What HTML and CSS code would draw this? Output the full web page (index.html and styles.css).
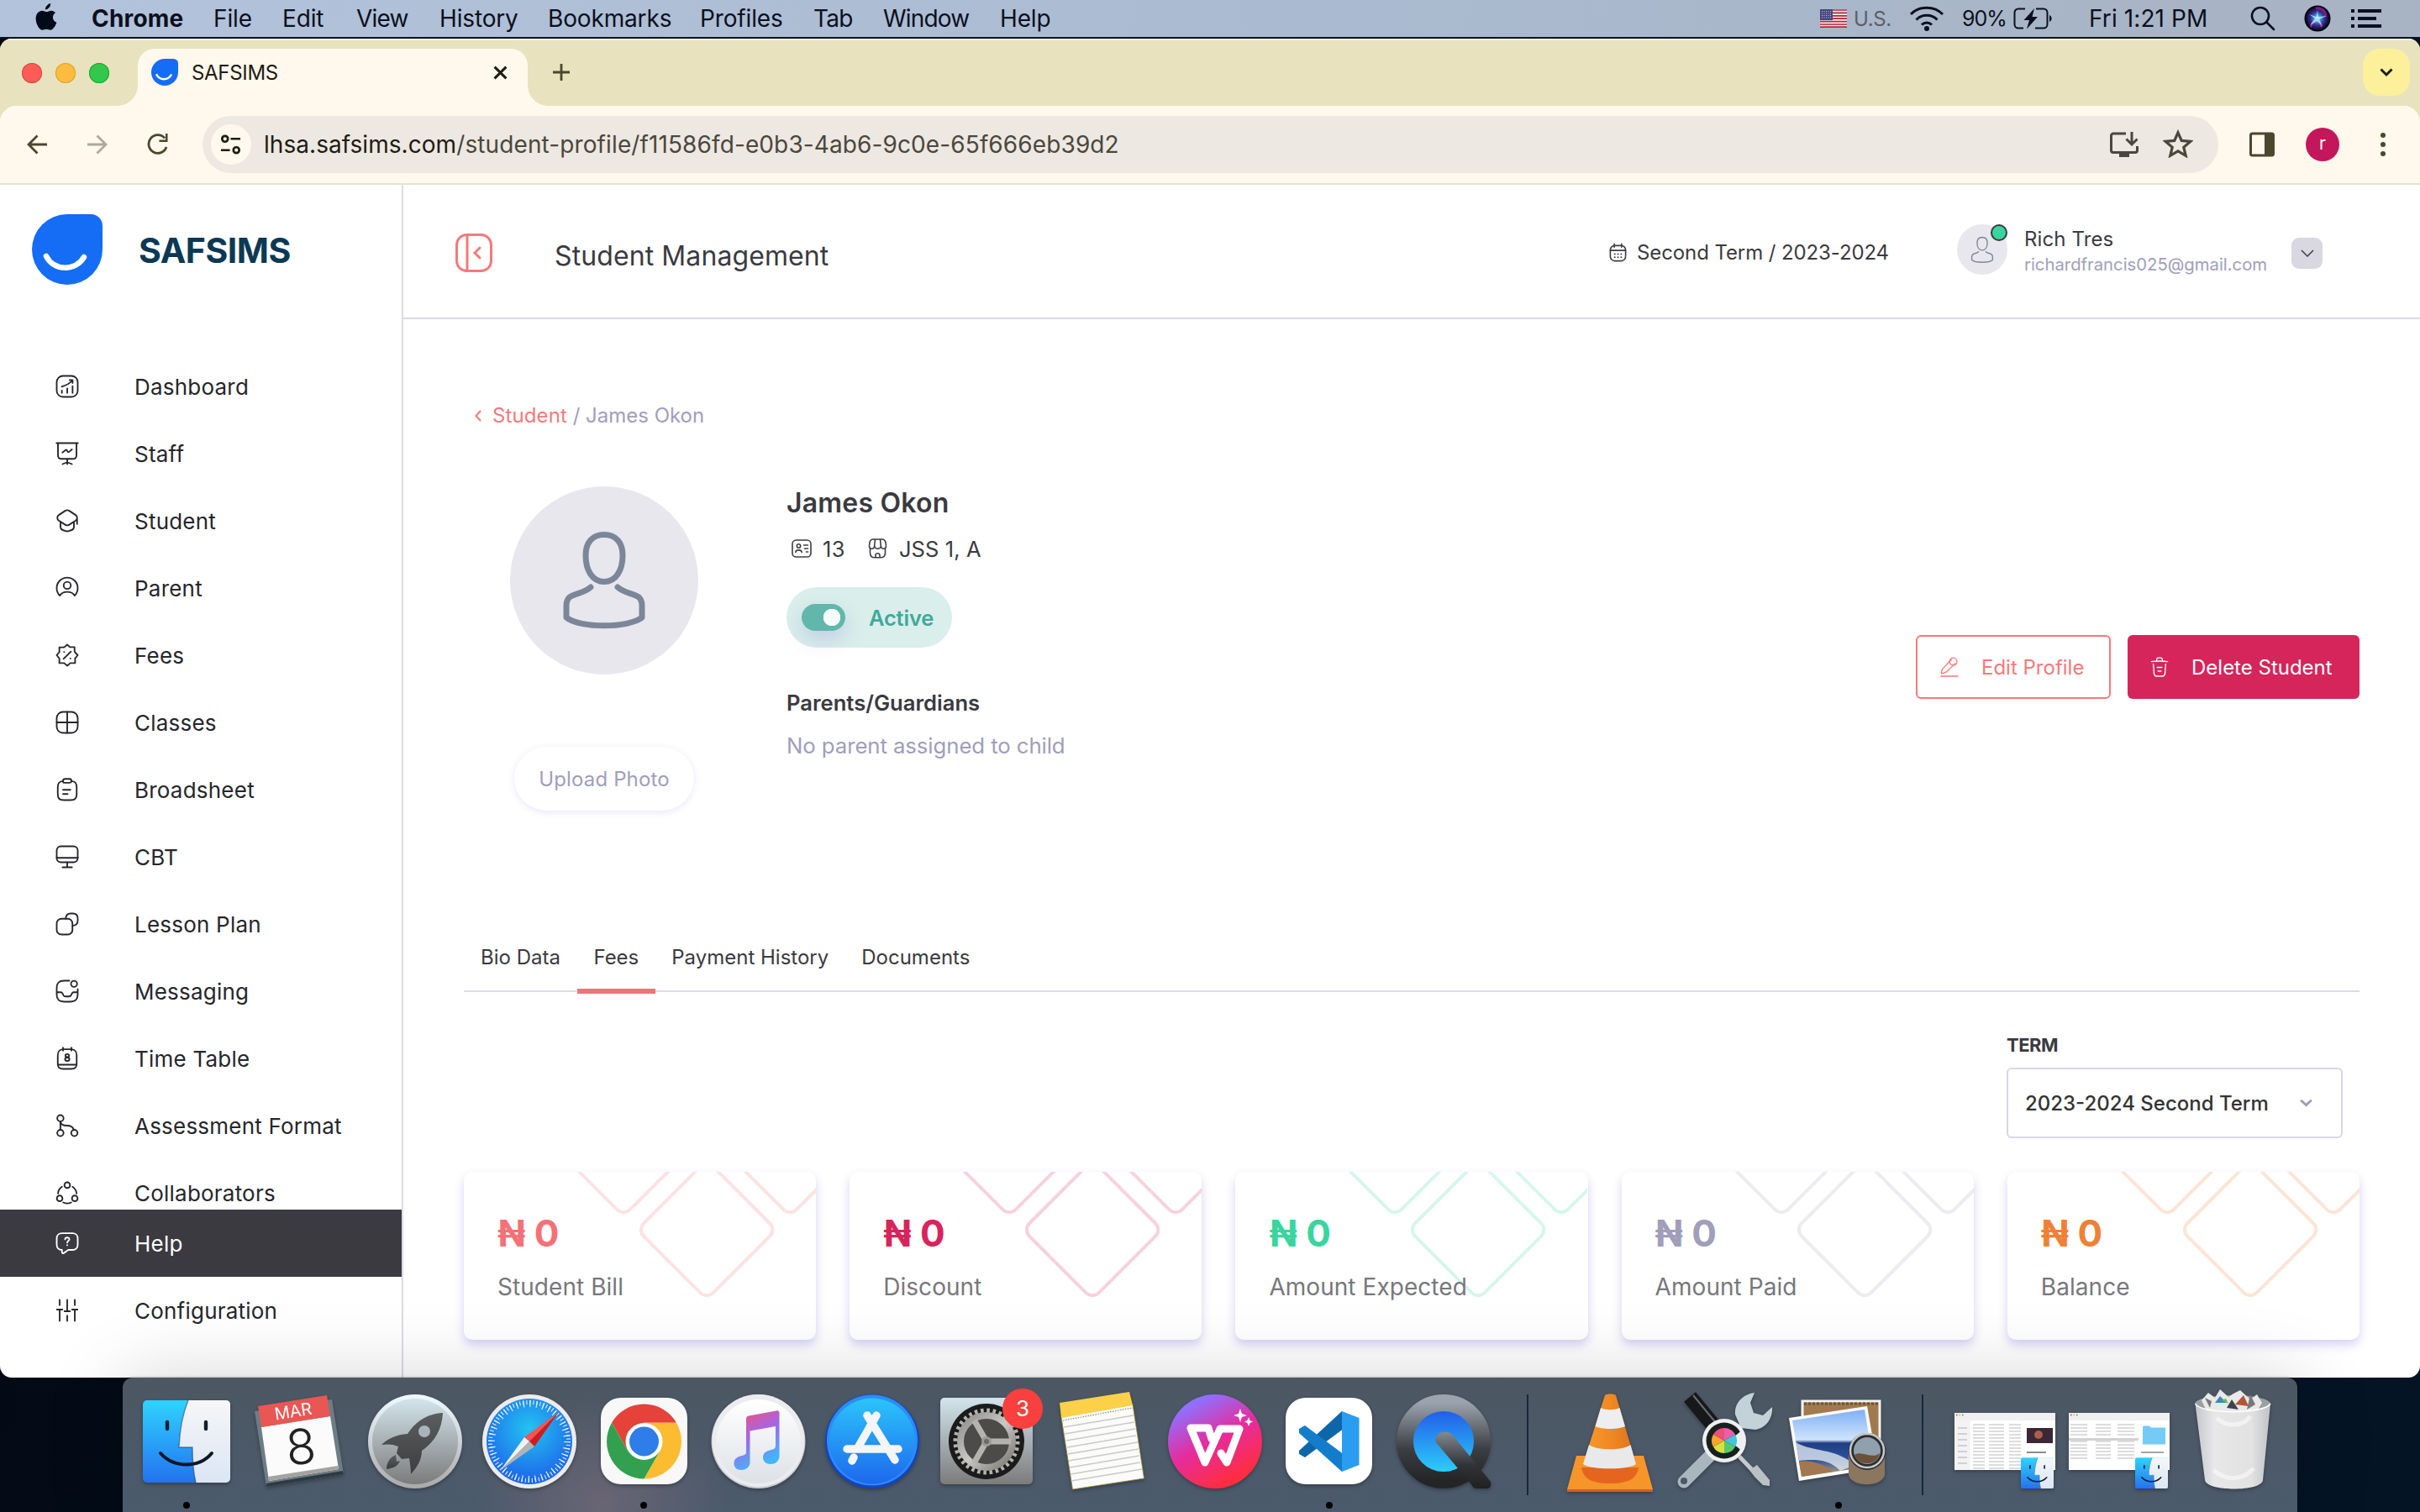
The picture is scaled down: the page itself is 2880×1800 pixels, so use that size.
FILE: index.html
```html
<!DOCTYPE html>
<html lang="en">
<head>
<meta charset="utf-8">
<title>SAFSIMS</title>
<link rel="stylesheet" href="styles.css">
</head>
<body>
<svg class="defs" width="0" height="0" aria-hidden="true">
  <defs>
    <linearGradient id="finderBlue" x1="0" y1="0" x2="0" y2="1"><stop offset="0" stop-color="#2fd3fe"/><stop offset="1" stop-color="#2373f0"/></linearGradient>
    <linearGradient id="finderWhite" x1="0" y1="0" x2="0" y2="1"><stop offset="0" stop-color="#f6f6f7"/><stop offset="1" stop-color="#dbe6f4"/></linearGradient>
    <linearGradient id="silver" x1="0" y1="0" x2="0" y2="1"><stop offset="0" stop-color="#d3e5ec"/><stop offset="1" stop-color="#7c7b7b"/></linearGradient>
    <linearGradient id="rim" x1="0" y1="0" x2="0" y2="1"><stop offset="0" stop-color="#effaff"/><stop offset="1" stop-color="#a9a9aa"/></linearGradient>
    <linearGradient id="rocket" x1="0" y1="0" x2="0" y2="1"><stop offset="0" stop-color="#5b5e60"/><stop offset="1" stop-color="#3c3d3e"/></linearGradient>
    <radialGradient id="safari" cx=".5" cy=".35" r=".65"><stop offset="0" stop-color="#23c3f0"/><stop offset="1" stop-color="#1c62ea"/></radialGradient>
    <linearGradient id="note" x1="0" y1="0" x2=".4" y2="1"><stop offset="0" stop-color="#fb4f66"/><stop offset=".5" stop-color="#a565e8"/><stop offset="1" stop-color="#3fb6fb"/></linearGradient>
    <linearGradient id="disc" x1="0" y1="0" x2="0" y2="1"><stop offset="0" stop-color="#fff"/><stop offset="1" stop-color="#dde1e6"/></linearGradient>
    <linearGradient id="store" x1="0" y1="0" x2="0" y2="1"><stop offset="0" stop-color="#2cc4fb"/><stop offset="1" stop-color="#1d68ee"/></linearGradient>
    <linearGradient id="wps" x1=".2" y1="0" x2=".75" y2="1"><stop offset=".1" stop-color="#8f70ff"/><stop offset=".5" stop-color="#e62c9c"/><stop offset=".9" stop-color="#ff2d40"/></linearGradient>
    <linearGradient id="qtRing" x1="0" y1="0" x2="0" y2="1"><stop offset="0" stop-color="#9aa3ae"/><stop offset=".6" stop-color="#3b3e42"/><stop offset="1" stop-color="#242526"/></linearGradient>
    <linearGradient id="qtBlue" x1="0" y1="0" x2="0" y2="1"><stop offset="0" stop-color="#2050e6"/><stop offset="1" stop-color="#2edcfd"/></linearGradient>
    <linearGradient id="qtTail" gradientUnits="userSpaceOnUse" x1="0" y1="64" x2="0" y2="132"><stop offset="0" stop-color="#848b93"/><stop offset=".6" stop-color="#303235"/><stop offset="1" stop-color="#202122"/></linearGradient>
    <linearGradient id="cone" x1="0" y1="0" x2="1" y2="0"><stop offset="0" stop-color="#f79a2a"/><stop offset=".5" stop-color="#f08a24"/><stop offset="1" stop-color="#e0701c"/></linearGradient>
    <linearGradient id="sky" x1="0" y1="0" x2="0" y2="1"><stop offset="0" stop-color="#7fb0f5"/><stop offset=".45" stop-color="#cfe4fb"/><stop offset=".5" stop-color="#1f3d86"/><stop offset=".75" stop-color="#2d5597"/><stop offset="1" stop-color="#c9a67c"/></linearGradient>
    <linearGradient id="bin" x1="0" y1="0" x2="1" y2="0"><stop offset="0" stop-color="#c9ccce"/><stop offset=".25" stop-color="#efefef"/><stop offset=".75" stop-color="#e9e9e8"/><stop offset="1" stop-color="#c5c8ca"/></linearGradient>
    <linearGradient id="metal" x1="0" y1="0" x2="1" y2="1"><stop offset="0" stop-color="#8d8d8b"/><stop offset=".5" stop-color="#c9c8c5"/><stop offset="1" stop-color="#77756f"/></linearGradient>
    <radialGradient id="siri"><stop offset="0" stop-color="#e8fbff"/><stop offset=".25" stop-color="#35a5d8"/><stop offset=".6" stop-color="#3a2b8f"/><stop offset="1" stop-color="#0b0820"/></radialGradient>
    <symbol id="finder" viewBox="16 27 104 98">
      <rect x="16" y="27" width="104" height="98" rx="5" fill="url(#finderBlue)"/>
      <path d="M70 27H115a5 5 0 0 1 5 5V120a5 5 0 0 1-5 5H79C76 112 75 98 75 83H59C60 62 63 44 70 27Z" fill="url(#finderWhite)"/>
      <path d="M70 27C63 44 60 62 59 83H75C75 98 76 112 79 125" fill="none" stroke="#153a66" stroke-opacity=".55" stroke-width="1.4"/>
      <path d="M45 53V61M91 53V61" stroke="#14202e" stroke-width="4.4" stroke-linecap="round"/>
      <path d="M37 90C53 108 83 108 98 90" fill="none" stroke="#0c1826" stroke-width="4" stroke-linecap="round"/>
    </symbol>
    <symbol id="logo" viewBox="0 0 84 84">
      <path d="M42 0H70A14 14 0 0 1 84 14V42A42 42 0 1 1 42 0Z" fill="#156cf5"/>
      <path d="M17 50C26 68 52 68 62 51" fill="none" stroke="#fff" stroke-width="6.5" stroke-linecap="round"/>
    </symbol>
    <symbol id="person" viewBox="0 0 100 120">
      <g fill="none" stroke-linecap="round" stroke-linejoin="round">
        <path d="M50 5.500C64 5.500 72 15 72 30 72 48 64 61.500 50 61.500S28 48 28 30C28 15 36 5.500 50 5.500Z"/>
        <path d="M34 68C22 79 5 73 5 90V104C20 117 80 117 95 104V90C95 73 78 79 66 68"/>
      </g>
    </symbol>
    <symbol id="diamonds" viewBox="0 0 419 200">
      <g fill="none" stroke="currentColor" stroke-width="4">
        <rect x="-58.5" y="-58.5" width="117" height="117" rx="11" transform="translate(289 69) rotate(45)"/>
        <rect x="-58.5" y="-58.5" width="117" height="117" rx="11" transform="translate(190 -30) rotate(45)"/>
        <rect x="-58.5" y="-58.5" width="117" height="117" rx="11" transform="translate(388 -30) rotate(45)"/>
      </g>
    </symbol>
  </defs>
</svg>

<header class="menubar">
  <svg class="apple" viewBox="0 0 26 32"><path d="M18 0C18.300 3.500 15.500 7 12 7.200 11.700 3.900 14.800.500 18 0ZM23.600 11C21.800 12.100 20.700 13.800 20.700 16.200 20.700 19 22.400 21 25 22 24.300 24.300 21.200 30.800 17.800 30.800 16.200 30.800 15.400 29.800 13.200 29.800 11 29.800 10.200 30.800 8.600 30.800 5 30.800 1 23.400 1 17.600 1 11.800 4.600 8.400 8.400 8.400 10.600 8.400 12 9.700 13.400 9.700 14.800 9.700 16.500 8.300 19 8.400 20.800 8.500 22.500 9.300 23.600 11Z"/></svg>
  <nav class="menus">
    <b>Chrome</b><span>File</span><span>Edit</span><span class="tight">View</span><span>History</span><span>Bookmarks</span><span>Profiles</span><span class="tight">Tab</span><span class="tight">Window</span><span>Help</span>
  </nav>
  <div class="status">
    <svg class="flag" viewBox="0 0 32 22"><rect width="32" height="22" fill="#f4f0f0"/><path d="M0 1H32M0 4.400H32M0 7.800H32M0 11.200H32M0 14.600H32M0 18H32M0 21.200H32" stroke="#b22334" stroke-width="1.700"/><rect width="15" height="13" fill="#46467f"/><path d="M2 2.500H14M2 5H14M2 7.500H14M2 10H14" stroke="#c9c9e0" stroke-dasharray="1 1.500"/></svg>
    <span class="locale">U.S.</span>
    <svg class="wifi" viewBox="0 0 42 30" fill="none" stroke="#0a1020" stroke-width="3"><path d="M2 10C12-.500 30-.500 40 10M8.500 16.500C15 9.500 27 9.500 33.500 16.500M15 22.500C18.500 19 23.500 19 27 22.500"/><circle cx="21" cy="27" r="1.500"/></svg>
    <span class="percent">90%</span>
    <svg class="battery" viewBox="0 0 46 26"><path d="M14 1.500H6A4.500 4.500 0 0 0 1.500 6V20A4.500 4.500 0 0 0 6 24.500H12M27 1.500H36A4.500 4.500 0 0 1 40.500 6V20A4.500 4.500 0 0 1 36 24.500H26" fill="none" stroke="#0a1020" stroke-width="2"/><path d="M25 1 12.500 15H19L16 25.500 29 11H22.500ZM43 9C46.500 10.500 46.500 15.500 43 17Z" fill="#0a1020"/></svg>
    <span class="clock">Fri 1:21 PM</span>
    <svg class="search" viewBox="0 0 30 30" fill="none" stroke="#0a1020" stroke-width="2.600" stroke-linecap="round"><circle cx="12" cy="12" r="10"/><path d="M19.500 19.500 28 28"/></svg>
    <svg class="siri" viewBox="0 0 32 32"><circle cx="16" cy="16" r="15.500" fill="#06040f"/><circle cx="16" cy="16" r="14" fill="url(#siri)"/><path d="M14 4C22 3 27 9 25 14" stroke="#a0269c" stroke-width="3" fill="none" opacity=".7"/><path d="M8 26C10 21 13 18 16 16M16 16 21 26" stroke="#d63ec2" stroke-width="2" fill="none" opacity=".7"/><path d="M16 6 17 14 27 13 18 17 22 25 15.500 19 7 24 13 16 6 11 14.500 14Z" fill="#bff6ff" opacity=".7"/></svg>
    <svg class="list" viewBox="0 0 36 22"><path d="M0 2H4M8 2H36M0 11H4M8 11H30M0 20H4M8 20H36" stroke="#0a1020" stroke-width="4"/></svg>
  </div>
</header>

<main class="window">
  <div class="tabstrip">
    <div class="lights"><i class="red"></i><i class="amber"></i><i class="green"></i></div>
    <div class="tab">
      <svg class="favicon"><use href="#logo"/></svg>
      <span>SAFSIMS</span>
      <svg class="close" viewBox="0 0 16 16"><path d="M1.500 1.500 14.500 14.500M14.500 1.500 1.500 14.500" stroke="#1e1c12" stroke-width="2.800"/></svg>
    </div>
    <svg class="plus" viewBox="0 0 20 20"><path d="M10 0V20M0 10H20" stroke="#4a472c" stroke-width="2.800"/></svg>
    <div class="tabsearch"><svg viewBox="0 0 16 11"><path d="M1.500 1.500 8 8 14.500 1.500" fill="none" stroke="#1e1c12" stroke-width="3"/></svg></div>
  </div>

  <div class="toolbar">
    <svg class="back" viewBox="0 0 24 24"><path d="M24 12H2M12.500 1.500 2 12 12.500 22.500" fill="none" stroke="#4a472c" stroke-width="2.800"/></svg>
    <svg class="forward" viewBox="0 0 24 24"><path d="M0 12H22M11.500 1.500 22 12 11.500 22.500" fill="none" stroke="#aeaa9a" stroke-width="2.800"/></svg>
    <svg class="reload" viewBox="0 0 26 26"><path d="M23 16A10.800 10.800 0 1 1 21 5.500" fill="none" stroke="#4a472c" stroke-width="2.800"/><path d="M24.500 0V10H14.500V7.500H22V0Z" fill="#4a472c"/></svg>
    <div class="address">
      <div class="siteinfo"><svg viewBox="0 0 26 24" fill="none" stroke="#1e1c12" stroke-width="2.800"><circle cx="6" cy="5" r="3.600"/><path d="M13 5H25M1 19H12"/><circle cx="20" cy="19" r="3.600"/></svg></div>
      <div class="url"><span>lhsa.safsims.com</span>/student-profile/f11586fd-e0b3-4ab6-9c0e-65f666eb39d2</div>
      <svg class="install" viewBox="0 0 34 30" fill="none" stroke="#4a473c" stroke-width="3"><path d="M19 2H4A2.500 2.500 0 0 0 1.500 4.500V22A2.500 2.500 0 0 0 4 24.500H30A2.500 2.500 0 0 0 32.500 22V17M26 0V14M19.500 8.500 26 15 32.500 8.500"/><path d="M11 26H23V30H11Z" fill="#4a473c" stroke="none"/></svg>
      <svg class="star" viewBox="0 0 34 32"><path d="M17 3.500 21 12.600 31 13.500 23.400 20 25.700 29.500 17 24.400 8.300 29.500 10.600 20 3 13.500 13 12.600Z" fill="none" stroke="#4a473c" stroke-width="3"/></svg>
    </div>
    <svg class="panel" viewBox="0 0 30 30"><rect x="1.500" y="2" width="27" height="26" rx="2" fill="none" stroke="#4a472c" stroke-width="3"/><path d="M18 2H28V28H18Z" fill="#4a472c"/></svg>
    <div class="profile">r</div>
    <svg class="dots" viewBox="0 0 6 28" fill="#4a472c"><circle cx="3" cy="3" r="3"/><circle cx="3" cy="14" r="3"/><circle cx="3" cy="25" r="3"/></svg>
  </div>

  <div class="app">
    <aside class="sidebar">
      <div class="brand"><svg><use href="#logo"/></svg><span>SAFSIMS</span></div>
      <ul class="nav scroll">
        <li><svg viewBox="0 0 24 24"><rect x="2" y="2" width="20" height="20" rx="6"/><path d="M6.900 18.200V16M12 18.200V14M17.100 18.200V11.800M17.100 6C14.300 9.200 10.700 11.300 6.900 12.200M14.200 5.900H17.100V8.800"/></svg>Dashboard</li>
        <li><svg viewBox="0 0 24 24"><path d="M1.800 2H22.200M3.200 2V13.500C3.200 16 4.200 17 6.700 17H17.300C19.800 17 20.800 16 20.800 13.500V2M12 17V22M7.500 22 12 20.200 16.500 22M7.500 11 10.200 8.700C10.800 8.300 11.300 8.400 11.700 8.900L12.300 10C12.700 10.600 13.300 10.700 13.800 10.300L16.500 8"/></svg>Staff</li>
        <li><svg viewBox="0 0 24 24"><path d="M10 2.500 4 6.500C2.100 7.700 2.100 10.500 4 11.800L10 15.700C11.100 16.400 12.900 16.400 14 15.700L20 11.800C21.900 10.500 21.900 7.800 20 6.500L14 2.500C12.900 1.800 11.100 1.800 10 2.500ZM5.600 13.100V17.800C5.600 19.100 6.600 20.400 7.800 20.800L11 21.900C11.500 22 12.400 22 13 21.900L16.200 20.800C17.400 20.400 18.400 19.100 18.400 17.800V13.100M21.400 15V9"/></svg>Student</li>
        <li><svg viewBox="0 0 24 24"><path d="M5 19.200A10 10 0 1 1 19 19.200"/><circle cx="12" cy="9.500" r="3.400"/><path d="M5.500 18.500C8 14.800 16 14.800 18.500 18.500"/></svg>Parent</li>
        <li><svg viewBox="0 0 24 24"><path d="M12 2 14.600 4.300H19V8.700L22 12 19.500 15V19.500H15L12 22 9 19.500H4.500V15L2 12 4.500 9V4.500H9Z"/><path d="M8.500 15.500 15.500 8.500M9 8.900H9.100M15 15.100H15.100"/></svg>Fees</li>
        <li><svg viewBox="0 0 24 24"><rect x="2" y="2" width="20" height="20" rx="6"/><path d="M12 2V22M2 12H22"/></svg>Classes</li>
        <li><svg viewBox="0 0 24 24"><path d="M8 12.200H15M8 16.200H12.400M10 5.500H14C16 5.500 16 4.500 16 3.800 16 1.800 15 1.800 14 1.800H10C9 1.800 8 1.800 8 3.800S9 5.500 10 5.500ZM16 3.900C19.300 4.100 21 5.300 21 9.800V16C21 20 20 22 15 22H9C4 22 3 20 3 16V9.800C3 5.300 4.700 4.100 8 3.900"/></svg>Broadsheet</li>
        <li><svg viewBox="0 0 24 24"><rect x="2" y="2" width="20" height="15.200" rx="4"/><path d="M2 13H22M12 17.200V22M7.500 22H16.500"/></svg>CBT</li>
        <li><svg viewBox="0 0 24 24"><rect x="2" y="7" width="15" height="15" rx="4.500"/><path d="M10.500 6.800C10.700 3.500 12 2 15.300 2H17.500C20.800 2 22 3.300 22 6.500V8.700C22 12 20.500 13.300 17.200 13.500"/></svg>Lesson Plan</li>
        <li><svg viewBox="0 0 24 24"><path d="M14 2H9C4 2 2 4 2 9V15C2 20 4 22 9 22H15C20 22 22 20 22 15V10M2 13H5.800C6.500 13 7.200 13.400 7.500 14.100L8.400 15.900C9 17 10 17 10.200 17H13.800C14.600 17 15.300 16.600 15.600 15.900L16.500 14.100C16.800 13.400 17.500 13 18.200 13H22"/><circle cx="18.500" cy="5" r="2.900"/></svg>Messaging</li>
        <li><svg viewBox="0 0 24 24"><path d="M8 1.800V4.500M16 1.800V4.500M3 18H21M16 3.300C19.300 3.500 21 4.800 21 9.500V16.500C21 20.500 20 22 15.500 22H8.500C4 22 3 20.500 3 16.500V9.500C3 4.800 4.700 3.500 8 3.300Z"/><ellipse cx="12" cy="9.300" rx="1.700" ry="1.400"/><ellipse cx="12" cy="12.800" rx="2.100" ry="1.600"/></svg>Time Table</li>
        <li><svg viewBox="0 0 24 24"><circle cx="5.500" cy="5" r="3"/><circle cx="5.500" cy="19" r="3"/><circle cx="18.800" cy="19" r="3"/><path d="M5.500 8V16M5.700 9C6.300 11.300 8.500 12 11.500 12 15 12 17.500 13 18.300 16"/></svg>Assessment Format</li>
        <li><svg viewBox="0 0 24 24"><circle cx="12" cy="4.700" r="2.700"/><circle cx="4.800" cy="17.300" r="2.700"/><circle cx="19.200" cy="17.300" r="2.700"/><path d="M17 6.200C19.200 7.600 20.600 10 20.900 12.600M3.200 12.700C3.400 10 4.800 7.700 7 6.200M8.200 21.200C10.500 22.300 13.500 22.300 15.800 21.200"/></svg>Collaborators</li>
      </ul>
      <ul class="nav">
        <li class="active"><svg viewBox="0 0 24 24"><path d="M17 18.400H13L8.600 21.500C7.900 21.900 7 21.500 7 20.600V18.400C4 18.400 2 16.400 2 13.400V7.500C2 4.500 4 2.500 7 2.500H17C20 2.500 22 4.500 22 7.500V13.400C22 16.400 20 18.400 17 18.400ZM12 11.400C12 10 14 10 14 8.200 14 7.100 13.100 6.600 12 6.600S10 7.300 10 8.300M12 13.800V13.900"/></svg>Help</li>
        <li><svg viewBox="0 0 24 24"><path d="M4.800 2V7M4.800 22V11.200M2.200 11.200H7.400M12 2V12.800M12 22V17M9.400 12.800H14.600M19.200 2V7M19.200 22V11.200M16.600 11.200H21.800"/></svg>Configuration</li>
      </ul>
    </aside>

    <section class="main">
      <header class="topbar">
        <svg class="collapse" viewBox="0 0 44 46" fill="none" stroke="#f37a7c" stroke-width="3"><rect x="1.500" y="1.500" width="41" height="43" rx="12"/><path d="M14 2V44"/><path d="M29 17 23 23 29 29" stroke-linecap="round"/></svg>
        <h1>Student Management</h1>
        <div class="term">
          <svg viewBox="0 0 24 24" fill="none" stroke="#3d3d44" stroke-width="1.700" stroke-linecap="round"><rect x="2.500" y="3.500" width="19" height="19" rx="5.500"/><path d="M7.500 1.500V5.500M16.500 1.500V5.500M2.500 9.500H21.500"/><path d="M8 14H8.100M12 14H12.100M16 14H16.100M8 18H8.100M12 18H12.100M16 18H16.100" stroke-width="2"/></svg>
          Second Term / 2023-2024
        </div>
        <div class="avatar small"><svg><use href="#person"/></svg><i></i></div>
        <div class="who"><b>Rich Tres</b><span>richardfrancis025@gmail.com</span></div>
        <div class="caret"><svg viewBox="0 0 16 9"><path d="M1 1 8 8 15 1" fill="none" stroke="#3d3d44" stroke-width="1.500"/></svg></div>
      </header>

      <div class="content">
        <div class="crumbs"><svg viewBox="0 0 8 14"><path d="M7 1 1.500 7 7 13" fill="none" stroke="#f37a7c" stroke-width="2"/></svg><a>Student</a> / James Okon</div>

        <div class="student">
          <div class="photo">
            <div class="avatar"><svg><use href="#person"/></svg></div>
            <button class="upload">Upload Photo</button>
          </div>
          <div class="info">
            <h2>James Okon</h2>
            <div class="meta">
              <svg viewBox="0 0 24 22" fill="none" stroke="#3d3d44" stroke-width="1.600" stroke-linecap="round"><rect x="1" y="1" width="22" height="20" rx="4.500"/><circle cx="8.500" cy="8" r="2.200"/><path d="M4.800 15.500C5.300 12 11.700 12 12.200 15.500M14.500 7H19.500M15.500 11H19.500M17.500 15H19.500"/></svg>
              <span class="num">13</span>
              <svg class="shop" viewBox="0 0 22 24" fill="none" stroke="#3d3d44" stroke-width="1.600"><path d="M2 11V17C2 21 3.500 22.800 7.500 22.800H14.500C18.500 22.800 20 21 20 17V11"/><path d="M8 1 7.200 8.500A3.800 3.800 0 0 0 14.800 8.500L14 1ZM8 1H5.500C2.500 1 2 2.500 1.500 5L1 8.500C.800 10.500 2 12.300 4.200 12.300 6 12.300 7 11 7.200 9M14 1H16.500C19.500 1 20 2.500 20.500 5L21 8.500C21.200 10.500 20 12.300 17.800 12.300 16 12.300 15 11 14.800 9M8.500 22.500V20C8.500 17 13.500 17 13.500 20V22.500"/></svg>
              <span>JSS 1, A</span>
            </div>
            <div class="state"><i class="switch"></i>Active</div>
            <h3>Parents/Guardians</h3>
            <p>No parent assigned to child</p>
          </div>
          <div class="actions">
            <button class="edit"><svg viewBox="0 0 24 26"><path d="M14.500 3.500 4 14.500C2.500 16 1.500 18.500 1.500 21.500 4.500 21.500 7 20.500 8.500 19L19.500 8.500"/><circle cx="17" cy="6" r="4.800"/><path d="M1 25H23"/></svg>Edit Profile</button>
            <button class="delete"><svg viewBox="0 0 24 26"><path d="M1.500 6C8 5.200 16 5.200 22.500 6M8 5.300 8.600 2.500C8.800 1.600 9 1.200 10.200 1.200H13.800C15 1.200 15.200 1.700 15.400 2.500L16 5.300M20 9.500 19.200 20.500C19 23.500 18.500 25 15.500 25H8.500C5.500 25 5 23.500 4.800 20.500L4 9.500M10 18.500H14M9 13.500H15"/></svg>Delete Student</button>
          </div>
        </div>

        <nav class="tabs"><a>Bio Data</a><a class="on">Fees</a><a>Payment History</a><a>Documents</a></nav>

        <div class="filter">
          <label>TERM</label>
          <div class="select"><span>2023-2024 Second Term</span><svg viewBox="0 0 14 9"><path d="M1.500 1.500 7 6.500 12.500 1.500" fill="none" stroke="#9d9cb5" stroke-width="2.800" stroke-linecap="round"/></svg></div>
        </div>

        <div class="cards">
          <div class="card coral"><svg><use href="#diamonds"/></svg><b>₦ 0</b><span>Student Bill</span></div>
          <div class="card crimson"><svg><use href="#diamonds"/></svg><b>₦ 0</b><span>Discount</span></div>
          <div class="card mint"><svg><use href="#diamonds"/></svg><b>₦ 0</b><span>Amount Expected</span></div>
          <div class="card mauve"><svg><use href="#diamonds"/></svg><b>₦ 0</b><span>Amount Paid</span></div>
          <div class="card orange"><svg><use href="#diamonds"/></svg><b>₦ 0</b><span>Balance</span></div>
        </div>
      </div>
    </section>
  </div>
</main>

<footer class="dock">
  <div class="slot running"><svg viewBox="0 0 136 160"><use href="#finder" x="16" y="27" width="104" height="98"/></svg></div>
  <div class="slot"><svg viewBox="0 0 136 160">
    <path d="M13 40 105 26 119 115 27 130Z" fill="#6d7d86"/><path d="M27 130 119 115 118 111 27 126Z" fill="#2e3a40"/>
    <path d="M21 59 103 46 113 109 30 123Z" fill="#fbfbfb"/><path d="M30 123 113 109 112 105 29 118Z" fill="#a4a39d"/>
    <path d="M17 34 99 21 103 46 21 59Z" fill="#e85753"/>
    <text class="cal-month" x="0" y="0" transform="translate(60 47) rotate(-9)">MAR</text>
    <text class="cal-day" x="0" y="0" transform="translate(70 103) rotate(-5)">8</text></svg></div>
  <div class="slot"><svg viewBox="0 0 136 160"><circle cx="68" cy="76" r="56" fill="url(#rim)"/><circle cx="68" cy="76" r="51" fill="url(#silver)"/>
    <path d="M101 42C84 43 70 50 59 67 46 68 36 72 28 80 35 79 41 79 48 82L46 90 52 97 61 96C62 103 63 109 63 115 71 106 76 97 76 87 92 76 100 61 101 42Z" fill="url(#rocket)"/><circle cx="79" cy="64" r="7" fill="#a9b4ba"/><path d="M45 92C38 95 34 101 34 109 42 108 48 105 50 99L46 100Z" fill="url(#rocket)"/></svg></div>
  <div class="slot"><svg viewBox="0 0 136 160"><circle cx="68" cy="76" r="56" fill="#ececec"/><circle cx="68" cy="76" r="51" fill="url(#safari)"/>
    <circle cx="68" cy="76" r="46.500" fill="none" stroke="#e8f2fb" stroke-width="5" stroke-dasharray="1.100 2.958"/><circle cx="68" cy="76" r="45" fill="none" stroke="#e8f2fb" stroke-width="8" stroke-dasharray="1.200 6.654"/>
    <path d="M103 41 62 71 68 76Z" fill="#ff5150"/><path d="M103 41 74 82 68 76Z" fill="#d01c1c"/><path d="M33 111 62 71 68 76Z" fill="#f2f2f2"/><path d="M33 111 74 82 68 76Z" fill="#b3b3b3"/></svg></div>
  <div class="slot running"><svg viewBox="0 0 136 160"><rect x="17" y="24" width="103" height="103" rx="24" fill="#f8f8f8"/>
    <g transform="translate(68.500 76)"><path d="M-38.500-22.250A44.500 44.500 0 0 1 38.500-22.250H0L-19.300 11.100Z" fill="#e5423a"/><path d="M-38.500-22.250A44.500 44.500 0 0 0 0 44.500L19.300 11.100-19.300 11.100Z" fill="#33a04f"/><path d="M38.500-22.250A44.500 44.500 0 0 1 0 44.500L19.300 11.100 0-22.250Z" fill="#fbbc32"/><circle r="22" fill="#fff"/><circle r="17.500" fill="#2f7de9"/></g></svg></div>
  <div class="slot"><svg viewBox="0 0 136 160"><circle cx="68.500" cy="76" r="56" fill="#c8ccd1"/><circle cx="68.500" cy="75" r="55" fill="#ececee"/><circle cx="68.500" cy="76" r="50" fill="url(#disc)"/>
    <path d="M54 49C54 47 55 46 57 45.500L90 39.500C92 39 93.500 40 93.500 42V93C93.500 100 88 103 83 103 78 103 74 100 74 95 74 89 79 87 84 86 88 85 89 84 89 80V58L58.500 63.500V101C58.500 107 53 110 48 110 43 110 39.500 107 39.500 102 39.500 96 44 94 49 93 53 92 54 91 54 88Z" fill="url(#note)"/></svg></div>
  <div class="slot"><svg viewBox="0 0 136 160"><circle cx="68" cy="76" r="56" fill="#1443c4"/><circle cx="68" cy="74.500" r="54" fill="#2a8df5"/><circle cx="68" cy="75.500" r="51" fill="url(#store)"/>
    <g stroke="#f3f5f8" stroke-width="9.500" stroke-linecap="round"><path d="M73 45 50 85M46 95 44 99M62 45 95 98M38 85H99"/></g></svg></div>
  <div class="slot"><svg viewBox="0 0 136 160"><rect x="13" y="24" width="110" height="103" rx="5" fill="url(#silver)"/><circle cx="68" cy="76" r="45" fill="#1b1b1b"/>
    <circle cx="68" cy="76" r="37" fill="none" stroke="#b4b3af" stroke-width="5" stroke-dasharray="3.600 3.665"/><circle cx="68" cy="76" r="31" fill="#4c4b49" stroke="url(#metal)" stroke-width="8"/>
    <path d="M68 76H97M68 76 53.500 51M68 76 53.500 101" stroke="#b5b3ae" stroke-width="7"/><circle cx="68" cy="76" r="6" fill="#9b9a97"/><circle cx="68" cy="76" r="3" fill="#6b6a68"/></svg><span class="badge">3</span></div>
  <div class="slot"><svg viewBox="0 0 136 160"><path d="M21 47 106 32 119.500 120 34.500 133Z" fill="#fbfbf9" stroke="#9b8a3a" stroke-width=".800"/><path d="M19 30 102 17 106 33 21 48Z" fill="#fcd048"/>
    <path d="M23 51 106 36" stroke="#8a8a84" stroke-width="1.200" stroke-dasharray="1.500 1.500"/><path d="M24 59 107 45M25 67 108 53M27 75 109 61M28 83 110 69M29 91 112 77M30 99 113 85M31 107 114 93M32 115 115 101M33 123 117 109" stroke="#c9c9c6" stroke-width="1.300"/></svg></div>
  <div class="slot"><svg viewBox="0 0 136 160"><circle cx="68" cy="76" r="56" fill="url(#wps)"/>
    <path d="M64 73 60 60H39L56 101 74 61H97L82 101 75 90" fill="none" stroke="#fff" stroke-width="9" stroke-linejoin="round" stroke-linecap="round"/><path d="M98 37 100 43 106 45 100 47 98 53 96 47 90 45 96 43ZM108 47 109.500 51 113 52.500 109.500 54 108 58 106.500 54 103 52.500 106.500 51Z" fill="#fff"/></svg></div>
  <div class="slot running"><svg viewBox="0 0 136 160"><rect x="16" y="24" width="103" height="103" rx="24" fill="#fff"/>
    <path d="M83 40 32 87V91L39 95 86 60Z" fill="#0d66a9"/><path d="M39 57 32 61V66L83 112 86 92Z" fill="#147dcb"/><path d="M83 40 103.500 48V104L83 112Z" fill="#2b9df0"/></svg></div>
  <div class="slot"><svg viewBox="0 0 136 160"><circle cx="68" cy="76" r="46" fill="url(#qtBlue)" stroke="url(#qtRing)" stroke-width="20"/><path d="M58 76C58 63 74 61 80 70L124 124C125 130 123 132 119 132H108C104 132 103 131 101 127Z" fill="url(#qtTail)"/></svg></div>
  <div class="rule"></div>
  <div class="slot"><svg viewBox="0 0 136 160"><path d="M28 93H108L119 133V136H17V133Z" fill="#f6952a"/><path d="M17 133H119V136H17Z" fill="#d5601a"/>
    <path d="M34 107C36 118 42 126 68 126S100 118 102 107Z" fill="#e5651f"/><path d="M62 21C64 19 73 19 75 21L99 103C92 110 44 110 36 103Z" fill="url(#cone)"/>
    <path d="M57 36C62 39 74 39 79.500 36L86 58C78 62 58 62 50.500 58Z" fill="#eeeeef"/><path d="M43 80C52 87 84 87 92.500 80L99 103C92 110 44 110 36 103Z" fill="#e9e9ea"/></svg></div>
  <div class="slot"><svg viewBox="0 0 136 160"><path d="M27 23 56 58" stroke="#17181a" stroke-width="18"/><path d="M31 21 59 55" stroke="#6a6d70" stroke-width="2"/><path d="M86 94 108 117" stroke="#c4cacd" stroke-width="5"/><path d="M98 110 107 104 122 122V129L114 128 104 118Z" fill="#b9c1c5"/>
    <path d="M82 62 20 124" stroke="#a9b6bd" stroke-width="15" stroke-linecap="round"/><circle cx="20" cy="123" r="4" fill="#4c5866"/><path d="M104 18C90 20 80 30 81 44L88 60 105 62C118 60 126 48 125 35L114 45 103 42 99 30Z" fill="#c3d2d9"/>
    <circle cx="68" cy="75" r="26" fill="#eef0f0"/><circle cx="68" cy="75" r="21.500" fill="#16211f"/><path d="M74 75 90 62V88Z" fill="#eef0f0"/>
    <path d="M68 75V60A15 15 0 0 1 81 67.500Z" fill="#ef5da8"/><path d="M68 75 81 67.500A15 15 0 0 1 81 82.500Z" fill="#45c4da"/><path d="M68 75 81 82.500A15 15 0 0 1 68 90Z" fill="#57c96a"/><path d="M68 75V90A15 15 0 0 1 55 82.500Z" fill="#d8e23c"/><path d="M68 75 55 82.500A15 15 0 0 1 55 67.500Z" fill="#f6a32f"/><path d="M68 75 55 67.500A15 15 0 0 1 68 60Z" fill="#e8517a"/></svg></div>
  <div class="slot running"><svg viewBox="0 0 136 160"><rect x="25" y="28" width="92" height="60" fill="#a07a4e" stroke="#f3f3f3" stroke-width="3"/><path d="M27 31H115" stroke="#6f5333" stroke-width="3" stroke-dasharray="3 2"/>
    <path d="M9 48 102 34 115 108 21 123Z" fill="#fbfbfb"/><path d="M13 51 99 38 110 105 24 118Z" fill="url(#sky)"/><path d="M17 77C40 90 60 82 88 104L70 111C55 95 35 98 21 99Z" fill="#e8f0f7" opacity=".75"/><path d="M21 100C35 98 50 103 62 112L24 118Z" fill="#a1784f"/>
    <path d="M80 90V116C84 131 119 131 123 116V88Z" fill="#8b7660"/><circle cx="102" cy="88" r="22" fill="#2c2d30"/><circle cx="102" cy="87" r="20" fill="none" stroke="#c9c9c9" stroke-width="2.500"/><circle cx="102" cy="87" r="16" fill="#91a0ad"/><path d="M87 92C95 86 108 98 117 90 114 106 91 106 87 92Z" fill="#6b5139"/></svg></div>
  <div class="rule"></div>
  <div class="slot"><svg viewBox="0 0 136 160"><rect x="8" y="42" width="120" height="68" fill="#fff"/><rect x="8" y="42" width="120" height="9" fill="#f0f0f0"/><rect x="8" y="51" width="19" height="59" fill="#f4f3f3"/><path d="M10 44.500H11.500" stroke="#ef4f47" stroke-width="2"/><path d="M13.500 44.500H15" stroke="#f4b93c" stroke-width="2"/><path d="M17 44.500H18.500" stroke="#44bb46" stroke-width="2"/>
    <path d="M12 60H23M12 67H23M12 74H23M12 81H23M12 88H23M12 95H23M12 102H23" stroke="#c5c5c8" stroke-width="1.300"/><path d="M30 56H88M30 60H88M30 64H88M30 68H88M30 72H88M30 76H88M30 80H88M30 84H88M30 88H88M30 92H88M30 96H88M30 100H88M30 104H88M30 108H88" stroke="#b9b9bb" stroke-width="1.200" stroke-dasharray="14 5 18 6"/>
    <rect x="94" y="60" width="31" height="18" fill="#3b2735"/><circle cx="108" cy="68" r="5" fill="#a8604a"/><path d="M94 89H117" stroke="#666" stroke-width="1.500"/><use href="#finder" x="87" y="95" width="39" height="37"/></svg></div>
  <div class="slot"><svg viewBox="0 0 136 160"><rect x="8" y="42" width="120" height="68" fill="#fff"/><rect x="8" y="42" width="120" height="9" fill="#f0f0f0"/><path d="M10 44.500H11.500" stroke="#ef4f47" stroke-width="2"/><path d="M13.500 44.500H15" stroke="#f4b93c" stroke-width="2"/><path d="M17 44.500H18.500" stroke="#44bb46" stroke-width="2"/>
    <path d="M10 56H88M10 60H88M10 64H88M10 68H88M10 76H88M10 80H88M10 84H88M10 88H88M10 92H88M10 96H88" stroke="#b9b9bb" stroke-width="1.200" stroke-dasharray="20 10 18 8"/><path d="M8 73.500H91" stroke="#d2d2d4" stroke-width="3"/>
    <path d="M96 59A1.500 1.500 0 0 1 97.500 57.500H104L106 59.500H123V79.500H96Z" fill="#74cbf5"/><path d="M94 89H121" stroke="#888" stroke-width="1.500"/><use href="#finder" x="87" y="95" width="39" height="37"/></svg></div>
  <div class="slot"><svg viewBox="0 0 136 160"><ellipse cx="67" cy="31" rx="45" ry="10" fill="#9aa0a3"/><path d="M30 27 38 18 46 24 52 14 62 23 68 19 76 15 88 26 96 20 102 30 96 40H36Z" fill="#e9e9e7"/><path d="M34 24 42 28 40 36ZM88 20 94 32 84 38Z" fill="#77787a"/><path d="M46 30 52 22 60 30Z" fill="#3f86c4"/><path d="M70 32 80 21 86 34Z" fill="#b4553a"/><path d="M60 36 66 26 74 38Z" fill="#3c4450"/><path d="M54 27 59 25 62 31Z" fill="#5fbf5a"/>
    <path d="M22.500 31C30 44 104 44 112 31L103 122C102 136 36 136 34 122Z" fill="url(#bin)" opacity=".96"/><path d="M22.500 31C30 44 104 44 112 31" fill="none" stroke="#fff" stroke-width="1.500"/><path d="M48 48C60 60 80 58 88 46M44 110C60 124 80 122 92 108" fill="none" stroke="#fff" stroke-width="5" opacity=".5"/></svg></div>
</footer>
</body>
</html>
```
FILE: styles.css
```css
* { box-sizing: border-box; margin: 0; padding: 0; }
html, body { width: 2880px; height: 1800px; overflow: hidden; }
body {
  display: flex; flex-direction: column;
  font-family: Inter, "Liberation Sans", sans-serif; color: #3a3a40;
  background: linear-gradient(120deg, #02060e, #04101f 60%, #051425);
}
svg { display: block; flex: none; }
ul { list-style: none; }
button { font: inherit; border: 0; background: none; }
.defs { position: absolute; }

/* menu bar */
.menubar {
  flex: none; height: 46px; display: flex; align-items: center; padding-left: 41px;
  background: linear-gradient(90deg, #b3c3db, #aabad0 55%, #a8b3c3);
  border-bottom: 2px solid #061326; color: #0a1020; font-size: 28px; white-space: nowrap;
}
.apple { width: 28px; height: 33px; fill: #000a18; margin-top: -3px; }
.menus {
  display: grid; margin-left: 40px; letter-spacing: -.15px;
  grid-template-columns: 145px 82px 88px 99px 129px 181px 135px 83px 139px 70px;
}
.menus b { letter-spacing: .2px; }
.menus .tight { letter-spacing: -.8px; }
.status { margin-left: auto; display: flex; align-items: center; margin-right: 46px; }
.flag { width: 32px; height: 22px; }
.locale { font-size: 24px; color: #5a5f68; margin-left: 8px; width: 66px; letter-spacing: -.4px; }
.wifi { width: 42px; height: 30px; }
.percent { font-size: 25px; letter-spacing: -1px; margin-left: 21px; width: 61px; }
.battery { width: 46px; height: 26px; }
.clock { margin-left: 44px; width: 192px; letter-spacing: .1px; }
.search { width: 30px; height: 30px; }
.siri { width: 32px; height: 32px; margin-left: 34px; }
.list { width: 36px; height: 22px; margin-left: 24px; }

/* browser window */
.window { flex: none; height: 1594px; border-radius: 14px; overflow: hidden; background: #fff; }
.tabstrip { height: 80px; display: flex; background: #e8e2be; border-top: 2px solid #f4f0da; }
.lights { display: flex; gap: 16px; margin: 27px 0 0 26px; width: 138px; }
.lights i { width: 24px; height: 24px; border-radius: 50%; }
.red { background: #fc5b57; box-shadow: inset 0 0 0 1px #e2463f; }
.amber { background: #fdbc40; box-shadow: inset 0 0 0 1px #dfa023; }
.green { background: #34c84a; box-shadow: inset 0 0 0 1px #1ba432; }
.tab {
  position: relative; width: 464px; height: 68px; margin-top: 10px; padding: 0 24px 12px 16px;
  display: flex; align-items: center; background: #fff8ec; border-radius: 20px 20px 0 0;
  font-size: 24px; letter-spacing: -.3px; color: #1e1c12;
}
.tab::before, .tab::after { content: ""; position: absolute; bottom: 0; width: 24px; height: 24px; }
.tab::before { left: -24px; background: radial-gradient(circle at 0 0, transparent 23.500px, #fff8ec 24px); }
.tab::after { right: -24px; background: radial-gradient(circle at 100% 0, transparent 23.500px, #fff8ec 24px); }
.favicon { width: 32px; height: 32px; margin-right: 16px; }
.close { width: 17px; height: 17px; margin-left: auto; }
.plus { width: 20px; height: 20px; margin: 28px 0 0 30px; }
.tabsearch {
  width: 56px; height: 56px; border-radius: 20px; background: #fdf09b;
  margin: 10px 12px 0 auto; display: grid; place-items: center;
}
.tabsearch svg { width: 16px; height: 11px; }
.toolbar {
  height: 94px; display: flex; align-items: center; padding: 0 41px 0 32px;
  border-bottom: 2px solid #e8e0cf;
  background:
    radial-gradient(circle at 20px 20px, #fff8ec 20px, #e8e2be 20.500px) 0 0 / 20px 20px no-repeat,
    radial-gradient(circle at 0 20px, #fff8ec 20px, #e8e2be 20.500px) 100% 0 / 20px 20px no-repeat,
    #fff8ec;
}
.back, .forward { width: 24px; height: 24px; }
.forward { margin-left: 48px; }
.reload { width: 26px; height: 26px; margin-left: 47px; }
.address {
  width: 2399px; height: 68px; margin-left: 40px; border-radius: 34px; background: #ede8e2;
  display: flex; align-items: center; padding: 0 30px 0 10px;
}
.siteinfo { width: 48px; height: 48px; border-radius: 50%; background: #fff8ec; display: grid; place-items: center; padding-right: 1px; }
.siteinfo svg { width: 25px; height: 24px; }
.url { margin-left: 15px; font-size: 28px; color: #4a473c; letter-spacing: .11px; }
.url span { color: #1e1c12; letter-spacing: .05px; }
.install { width: 34px; height: 30px; margin-left: auto; }
.star { width: 36px; height: 34px; margin-left: 29px; margin-top: -3px; }
.panel { width: 30px; height: 30px; margin-left: 37px; }
.profile {
  width: 40px; height: 40px; border-radius: 50%; background: #c2185b; color: #fff;
  font-size: 21px; line-height: 38px; text-align: center; margin-left: 37px;
}
.dots { width: 6px; height: 28px; margin-left: auto; }

/* application */
.app { display: flex; height: 1420px; }
.sidebar { width: 480px; border-right: 2px solid #dbdae6; }
.brand { height: 200px; padding: 35px 0 0 38px; display: flex; align-items: flex-start; }
.brand svg { width: 84px; height: 84px; }
.brand span { margin-left: 43px; line-height: 87px; font-size: 41px; font-weight: 700; letter-spacing: -.5px; color: #0b3954; }
.nav.scroll { height: 1020px; overflow: hidden; }
.nav li {
  height: 80px; display: flex; align-items: center; gap: 65px; padding-left: 65px;
  font-size: 26px; letter-spacing: .22px; color: #26262b;
}
.nav svg { width: 30px; height: 30px; fill: none; stroke: currentColor; stroke-width: 1.5; stroke-linecap: round; stroke-linejoin: round; }
.nav .active { background: #3a3a40; color: #fff; }
.main { flex: 1; }

.topbar { height: 160px; border-bottom: 2px solid #dbdae6; display: flex; align-items: center; padding: 3px 116px 0 62px; }
.collapse { width: 44px; height: 46px; }
.topbar h1 { margin: 7px 0 0 74px; font-size: 32px; font-weight: 400; letter-spacing: .1px; }
.term { margin-left: auto; display: flex; align-items: center; gap: 11px; font-size: 24px; letter-spacing: -.1px; width: 415px; }
.term svg { width: 23px; height: 23px; }
.avatar { position: relative; border-radius: 50%; background: #e8e7ee; stroke: #7b8799; stroke-width: 7; }
.avatar.small { width: 60px; height: 60px; margin-top: -7px; }
.avatar.small svg { width: 28px; height: 33px; margin: 14px auto; stroke-width: 5; }
.avatar.small i {
  position: absolute; top: 0; right: 0; width: 20px; height: 20px;
  border-radius: 50%; background: #3ad59f; border: 2px solid #3a3a40;
}
.who { margin: -2px 0 0 20px; width: 318px; }
.who b { display: block; font-size: 24px; font-weight: 400; line-height: 30px; letter-spacing: .1px; }
.who span { display: block; font-size: 20.300px; line-height: 29px; color: #a09eb9; }
.caret { width: 37px; height: 37px; border-radius: 9px; background: #d8d7e2; display: grid; place-items: center; margin-top: 1px; }
.caret svg { width: 16px; height: 9px; }

.content { padding: 100px 72px 0; }
.crumbs { height: 30px; line-height: 30px; padding-left: 13px; display: flex; align-items: center; font-size: 24px; color: #a09eb9; white-space: pre; }
.crumbs svg { width: 8px; height: 14px; margin-right: 13px; }
.crumbs a { color: #f37a7c; letter-spacing: .1px; }

.student { display: flex; align-items: flex-start; margin-top: 69px; height: 386px; }
.photo { width: 334px; display: flex; flex-direction: column; align-items: center; }
.photo .avatar { width: 224px; height: 224px; }
.photo .avatar svg { width: 100px; height: 120px; margin: 52px auto 0; }
.upload {
  margin-top: 86px; width: 214px; height: 76px; border-radius: 38px; font-size: 24px;
  letter-spacing: .15px; color: #a09eb9; box-shadow: 0 2px 8px rgba(90, 80, 220, .14);
}
.info { margin-left: 50px; }
.info h2 { font-size: 32px; font-weight: 600; line-height: 40px; letter-spacing: .2px; }
.meta { display: flex; align-items: center; height: 30px; margin: 19px 0 31px 6px; font-size: 25.500px; }
.meta svg { width: 24px; height: 22px; }
.meta .shop { width: 23px; height: 24px; margin-left: 27px; }
.meta span { margin-left: 14px; letter-spacing: .1px; }
.meta .num { margin-left: 13px; letter-spacing: .4px; }
.state {
  width: 197px; height: 72px; border-radius: 36px; background: #daeeeb; color: #40a99b;
  display: flex; align-items: center; font-size: 25.500px; font-weight: 600; letter-spacing: -.2px;
}
.switch {
  width: 52px; height: 32px; border-radius: 16px; margin: 0 28px 0 18px;
  background: radial-gradient(circle at 36px 16px, #f6fbfb 10px, #62b7ac 10.500px);
  box-shadow: 0 10px 24px rgba(90, 80, 200, .2);
}
.info h3 { margin-top: 51px; font-size: 25.600px; font-weight: 600; line-height: 30px; }
.info p { margin-top: 21px; font-size: 25.800px; line-height: 30px; letter-spacing: -.1px; color: #a09eb9; }
.actions { margin: 177px 0 0 auto; display: flex; gap: 20px; font-size: 24px; letter-spacing: .17px; }
.actions button { height: 76px; border-radius: 6px; display: flex; align-items: center; }
.actions svg { width: 22px; height: 24px; fill: none; stroke: currentColor; stroke-width: 1.5; stroke-linecap: round; }
.actions .edit { width: 232px; border: 2px solid #f37a7c; color: #f37a7c; padding-left: 27px; gap: 27px; }
.actions .delete { width: 276px; background: #d6255b; color: #fff; padding-left: 27px; gap: 27px; }

.tabs { margin-top: 135px; height: 81px; border-bottom: 2px solid #dbdae6; display: flex; font-size: 24px; letter-spacing: 0; }
.tabs a { height: 83px; padding: 25px 20px 0; line-height: 30px; }
.tabs a + a { padding: 25px 19.500px 0; }
.tabs .on { border-bottom: 6px solid #f37277; }
.filter { margin: 48px 20px 0 auto; width: 400px; }
.filter label { display: block; font-size: 22px; font-weight: 700; line-height: 30px; letter-spacing: -.5px; }
.select {
  height: 84px; margin-top: 12px; border: 2px solid #d8d7e4; border-radius: 6px; padding: 0 34px 0 20px;
  display: flex; align-items: center; justify-content: space-between; font-size: 24px; font-weight: 500; color: #333;
}
.select svg { width: 15px; height: 9px; }

.cards { display: grid; grid-template-columns: repeat(5, 1fr); gap: 40px; margin-top: 40px; }
.card {
  position: relative; height: 200px; border-radius: 10px; padding: 48px 0 0 40px;
  background: #fff; box-shadow: 0 6px 12px rgba(80, 65, 200, .24);
}
.card svg { position: absolute; inset: 0; width: 100%; height: 200px; opacity: .2; }
.card b { display: block; font-size: 44px; font-weight: 700; line-height: 50px; letter-spacing: 0; }
.card span { position: relative; display: block; margin-top: 19px; font-size: 28px; line-height: 40px; letter-spacing: .05px; color: #77777b; }
.coral { color: #f37277; }
.crimson { color: #d6255b; }
.mint { color: #3ad59f; }
.mauve { color: #a09eb9; }
.orange { color: #ef8137; }

/* dock */
.dock {
  position: relative; z-index: 1; flex: none; width: 2588px; height: 160px; margin-left: 146px; padding-left: 8px; display: flex;
  border-radius: 12px 12px 0 0;
  background:
    radial-gradient(ellipse 150px 130px at 570px 150px, rgba(125, 108, 122, .6), transparent),
    linear-gradient(180deg, #4c5762, #4b5a6c);
  box-shadow: 0 0 90px rgba(0, 0, 0, .17), 0 0 3px rgba(0, 0, 0, .4);
}
.slot { position: relative; width: 136px; height: 160px; }
.slot > svg { width: 136px; height: 160px; filter: drop-shadow(0 2px 2px rgba(0, 0, 0, .3)); }
.running::after { content: ""; position: absolute; left: 64px; bottom: 4px; width: 8px; height: 8px; border-radius: 50%; background: #000; }
.rule { width: 2px; height: 120px; margin: 20px 29px 20px 31px; background: #17283a; }
.badge {
  position: absolute; left: 87px; top: 13px; width: 48px; height: 48px; border-radius: 50%;
  background: #f9403e; color: #fff; font-size: 26px; line-height: 48px; text-align: center;
}
.cal-month { font-size: 20px; fill: #fff; text-anchor: middle; }
.cal-day { font-size: 58px; font-weight: 300; fill: #222; text-anchor: middle; }
```
